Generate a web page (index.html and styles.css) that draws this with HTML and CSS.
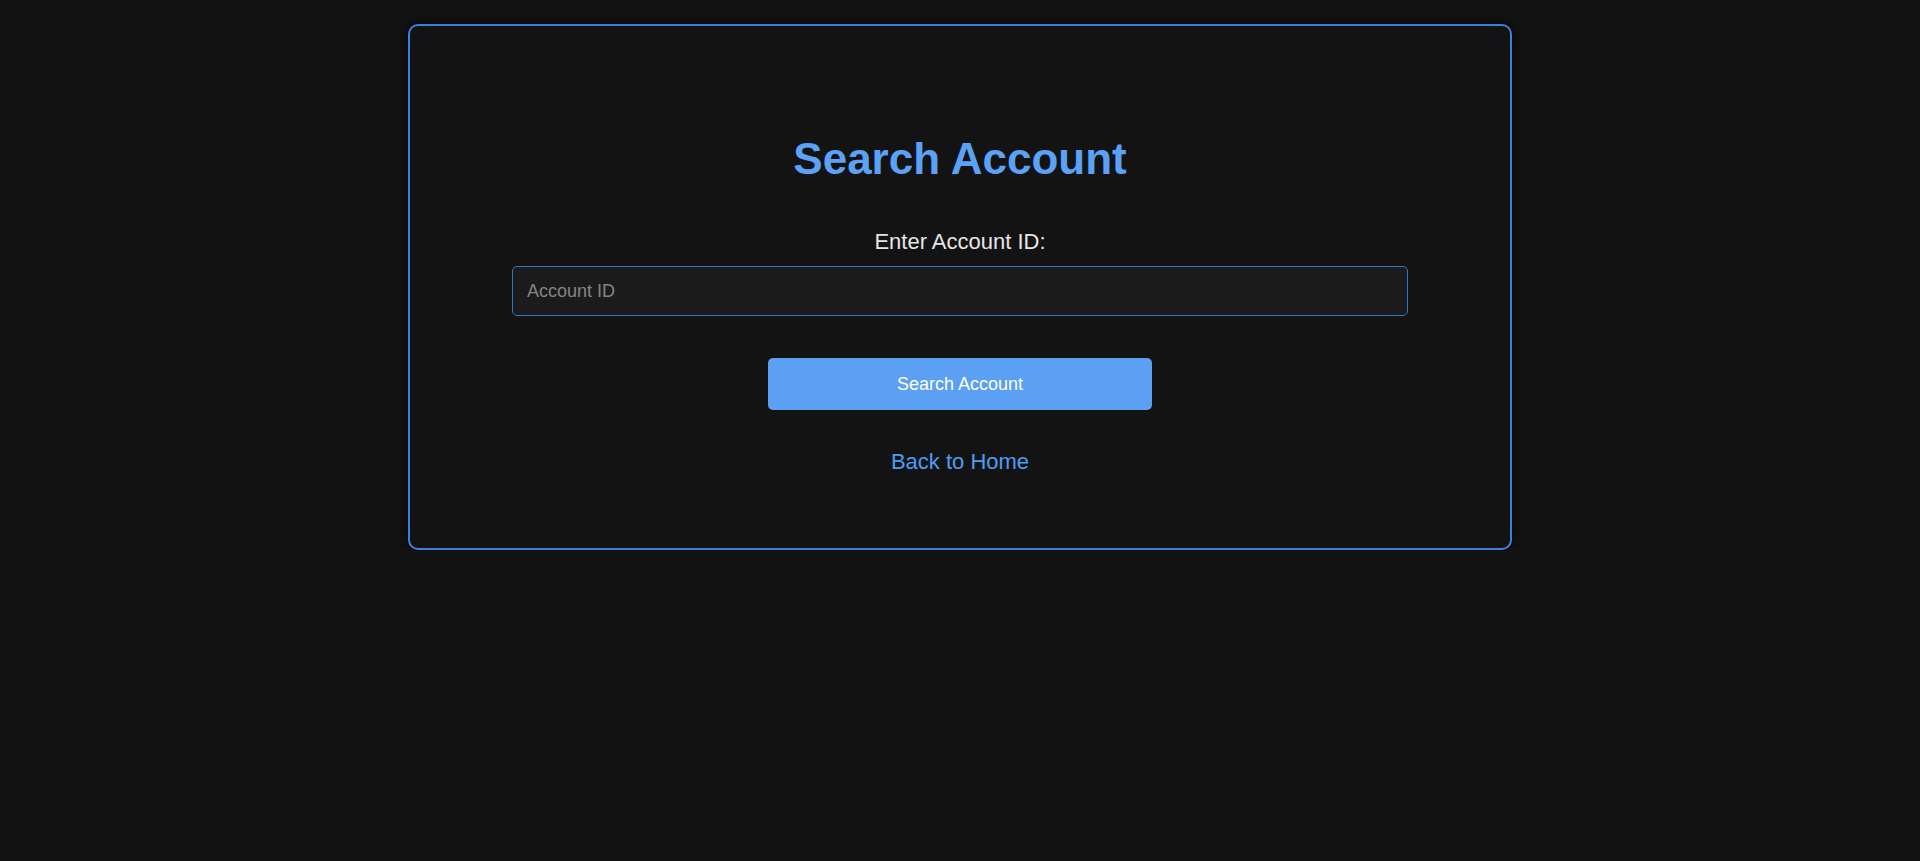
FILE: index.html
```html
<!DOCTYPE html>
<html lang="en">
<head>
<meta charset="utf-8">
<title>Search Account</title>
<link rel="stylesheet" href="styles.css">
</head>
<body>
<main class="page">
  <section class="card">
    <h1 class="title">Search Account</h1>
    <form class="form" onsubmit="return false;">
      <label class="label" for="accountId">Enter Account ID:</label>
      <input class="input" id="accountId" type="text" placeholder="Account ID">
      <button class="button" type="submit">Search Account</button>
    </form>
    <a class="back-link" href="#">Back to Home</a>
  </section>
</main>
</body>
</html>
```

FILE: styles.css
```css
* {
  box-sizing: border-box;
}

html, body {
  margin: 0;
  padding: 0;
  background: #121212;
  font-family: "Liberation Sans", Arial, sans-serif;
}

.page {
  display: flex;
  justify-content: center;
  padding-top: 24px;
}

.card {
  width: 1104px;
  background: #131313;
  border: 2px solid #3b7fe0;
  border-radius: 10px;
  box-shadow: 0 0 12px rgba(0, 0, 0, 0.6);
  padding: 108px 102px 74px;
  display: flex;
  flex-direction: column;
  align-items: center;
}

.title {
  margin: 0;
  font-size: 44px;
  line-height: 49px;
  font-weight: bold;
  color: #5ba1f6;
  text-align: center;
}

.form {
  width: 100%;
  display: flex;
  flex-direction: column;
  align-items: center;
  margin-top: 47px;
}

.label {
  font-size: 22px;
  line-height: 24px;
  color: #e6e6e6;
}

.input {
  margin-top: 12px;
  width: 100%;
  height: 50px;
  padding: 0 14px;
  background: #1b1b1b;
  border: 1px solid #3873c9;
  border-radius: 5px;
  color: #e6e6e6;
  font-family: "Liberation Sans", Arial, sans-serif;
  font-size: 18px;
  outline: none;
}

.input::placeholder {
  color: #858585;
}

.button {
  margin-top: 42px;
  width: 384px;
  height: 52px;
  background: #5ba0f2;
  border: none;
  border-radius: 5px;
  color: #ffffff;
  font-family: "Liberation Sans", Arial, sans-serif;
  font-size: 18px;
  cursor: pointer;
}

.back-link {
  margin-top: 40px;
  font-size: 22px;
  line-height: 24px;
  color: #4c9ef5;
  text-decoration: none;
}
```
